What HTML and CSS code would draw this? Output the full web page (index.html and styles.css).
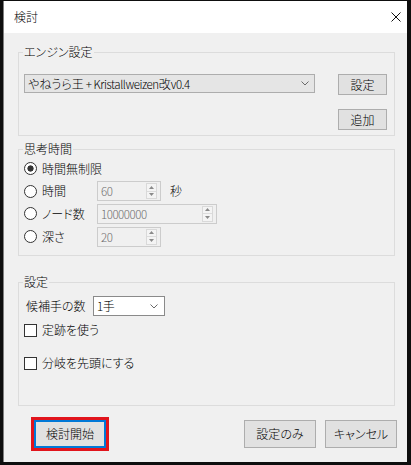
FILE: index.html
```html
<!DOCTYPE html>
<html lang="ja">
<head>
<meta charset="utf-8">
<title>検討</title>
<link rel="stylesheet" href="styles.css">
</head>
<body>
<div class="window">
  <div class="titlebar">
    <span class="title">検討</span>
    <svg class="close" width="10" height="10" viewBox="0 0 10 10"><path d="M0.5 0.5L9.5 9.5M9.5 0.5L0.5 9.5" stroke="#111" stroke-width="1"/></svg>
  </div>
  <div class="content">
    <fieldset class="group g-engine">
      <legend>エンジン設定</legend>
      <div class="engine-grid">
        <div class="combo combo-engine">
          <span>やねうら王<span class="lat"> + Kristallweizen</span>改<span class="lat">v0.4</span></span>
          <svg class="chev" width="8" height="5" viewBox="0 0 8 5"><path d="M0.5 0.5L4 4L7.5 0.5" fill="none" stroke="#6a6a6a" stroke-width="1"/></svg>
        </div>
        <div class="btn btn-small">設定</div>
        <div class="btn btn-small btn-add">追加</div>
      </div>
    </fieldset>

    <fieldset class="group g-time">
      <legend>思考時間</legend>
      <div class="opt-row r1">
        <label class="radio-label"><span class="radio checked"></span>時間無制限</label>
      </div>
      <div class="opt-row r2">
        <label class="radio-label"><span class="radio"></span>時間</label>
        <div class="spin spin-short"><span class="lat">60</span><div class="spin-btns"><svg width="5" height="3" viewBox="0 0 5 3"><path d="M0 3L2.5 0L5 3Z" fill="#8a8a8a"/></svg><i></i><svg width="5" height="3" viewBox="0 0 5 3"><path d="M0 0L2.5 3L5 0Z" fill="#8a8a8a"/></svg></div></div>
        <span class="unit">秒</span>
      </div>
      <div class="opt-row r3">
        <label class="radio-label"><span class="radio"></span>ノード数</label>
        <div class="spin spin-long"><span class="lat">10000000</span><div class="spin-btns"><svg width="5" height="3" viewBox="0 0 5 3"><path d="M0 3L2.5 0L5 3Z" fill="#8a8a8a"/></svg><i></i><svg width="5" height="3" viewBox="0 0 5 3"><path d="M0 0L2.5 3L5 0Z" fill="#8a8a8a"/></svg></div></div>
      </div>
      <div class="opt-row r4">
        <label class="radio-label"><span class="radio"></span>深さ</label>
        <div class="spin spin-short"><span class="lat">20</span><div class="spin-btns"><svg width="5" height="3" viewBox="0 0 5 3"><path d="M0 3L2.5 0L5 3Z" fill="#8a8a8a"/></svg><i></i><svg width="5" height="3" viewBox="0 0 5 3"><path d="M0 0L2.5 3L5 0Z" fill="#8a8a8a"/></svg></div></div>
      </div>
    </fieldset>

    <fieldset class="group g-settings">
      <legend>設定</legend>
      <div class="cand-row">
        <span class="cand-label">候補手の数</span>
        <div class="combo combo-cand">
          <span><span class="lat">1</span>手</span>
          <svg class="chev" width="8" height="5" viewBox="0 0 8 5"><path d="M0.5 0.5L4 4L7.5 0.5" fill="none" stroke="#6a6a6a" stroke-width="1"/></svg>
        </div>
      </div>
      <label class="check-row c1"><span class="checkbox"></span>定跡を使う</label>
      <label class="check-row c2"><span class="checkbox"></span>分岐を先頭にする</label>
    </fieldset>
  </div>
  <div class="button-row">
    <div class="btn btn-big btn-primary">検討開始</div>
    <div class="spacer"></div>
    <div class="btn btn-big">設定のみ</div>
    <div class="btn btn-big">キャンセル</div>
  </div>
</div>
</body>
</html>
```

FILE: styles.css
```css
html, body {
  margin: 0;
}
body {
  width: 411px;
  height: 465px;
  overflow: hidden;
  box-sizing: border-box;
  padding: 1px 4px 0 3px;
  background: #0e0e0e;
  font-family: "Noto Sans CJK JP", "Noto Sans", sans-serif;
  font-size: 12px;
  font-weight: 300;
  font-feature-settings: "palt";
  color: #000;
}
.lat {
  font-size: 11.5px;
  letter-spacing: -0.45px;
}
.window {
  width: 404px;
  height: 461px;
  box-sizing: border-box;
  border-left: 1px solid #7f7f7f;
  background: #f0f0f0;
  display: flex;
  flex-direction: column;
}
.titlebar {
  height: 32px;
  flex: none;
  background: #fff;
  display: flex;
  align-items: center;
  justify-content: space-between;
  padding: 0 6px 0 10px;
}
.title {
  line-height: 14px;
}
.close {
  display: block;
}
.content {
  padding-top: 12px;
  display: flex;
  flex-direction: column;
}
.group {
  margin: 0 12px 0 14px;
  border: 1px solid #dcdcdc;
  min-width: 0;
}
.group legend {
  padding: 0 1px;
  margin-left: -1px;
  line-height: 14px;
  font-size: 12px;
}

/* engine group */
.g-engine {
  padding: 15px 7px 5px 5px;
}
.engine-grid {
  display: grid;
  grid-template-columns: 291px 49px;
  column-gap: 23px;
  row-gap: 14px;
  align-items: start;
}
.combo {
  box-sizing: border-box;
  display: flex;
  align-items: center;
  padding-left: 3px;
  line-height: 14px;
  white-space: nowrap;
}
.combo .chev {
  margin-left: auto;
  flex: none;
}
.combo-engine {
  height: 19px;
  border: 1px solid #adadad;
  background: #e5e5e5;
  padding-right: 5px;
}
.btn {
  box-sizing: border-box;
  border: 1px solid #adadad;
  background: #e1e1e1;
  display: flex;
  align-items: center;
  justify-content: center;
  line-height: 14px;
  white-space: nowrap;
}
.btn-small {
  width: 49px;
  height: 21px;
}
.btn-add {
  grid-column: 2;
}

/* time group */
.g-time {
  margin-top: 6px;
  padding: 1px 7px 7px 5px;
}
.opt-row {
  display: grid;
  grid-template-columns: 73px auto auto;
  justify-content: start;
  align-items: center;
  height: 23px;
}
.opt-row.r2 {
  height: 22px;
}
.radio-label {
  display: flex;
  align-items: center;
  gap: 5px;
  line-height: 14px;
  white-space: nowrap;
}
.radio {
  flex: none;
  width: 13px;
  height: 13px;
  box-sizing: border-box;
  border: 1px solid #333;
  border-radius: 50%;
  background: #fff;
}
.radio.checked {
  background: radial-gradient(circle, #333 0, #333 2.8px, #fff 3.4px);
}
.spin {
  box-sizing: border-box;
  height: 20px;
  border: 1px solid #cccccc;
  background: #f0f0f0;
  color: #6d6d6d;
  display: flex;
  align-items: center;
  padding: 0 3px 0 3px;
  line-height: 14px;
}
.spin-short {
  width: 64px;
}
.spin-long {
  width: 120px;
}
.spin-btns {
  margin-left: auto;
  box-sizing: border-box;
  width: 11px;
  height: 16px;
  border: 1px solid #d9d9d9;
  background: #f4f4f4;
  display: flex;
  flex-direction: column;
  align-items: center;
  justify-content: space-evenly;
}
.spin-btns svg {
  display: block;
}
.spin-btns i {
  display: block;
  width: 100%;
  height: 1px;
  background: #dcdcdc;
}
.unit {
  margin-left: 9px;
  line-height: 14px;
}

/* settings group */
.g-settings {
  margin-top: 19px;
  padding: 7px 7px 34px 5px;
}
.cand-row {
  display: grid;
  grid-template-columns: 69px 72px;
  align-items: center;
  height: 20px;
}
.cand-label {
  padding-left: 2px;
  line-height: 14px;
  white-space: nowrap;
}
.combo-cand {
  height: 20px;
  border: 1px solid #8a8a8a;
  background: #fff;
  padding-right: 6px;
}
.check-row {
  display: flex;
  align-items: center;
  gap: 5px;
  height: 16px;
  line-height: 14px;
}
.check-row.c1 {
  margin-top: 6px;
}
.check-row.c2 {
  margin-top: 17px;
}
.checkbox {
  flex: none;
  width: 13px;
  height: 13px;
  box-sizing: border-box;
  border: 1px solid #333;
  background: #fff;
}

/* bottom buttons */
.button-row {
  display: flex;
  align-items: center;
  gap: 9px;
  padding: 0 10px 0 30px;
  margin-top: 14px;
}
.spacer {
  flex: 1;
}
.btn-big {
  width: 72px;
  height: 28px;
}
.btn-primary {
  border: 2px solid #0078d7;
  outline: 3px solid #e1141c;
}
```
